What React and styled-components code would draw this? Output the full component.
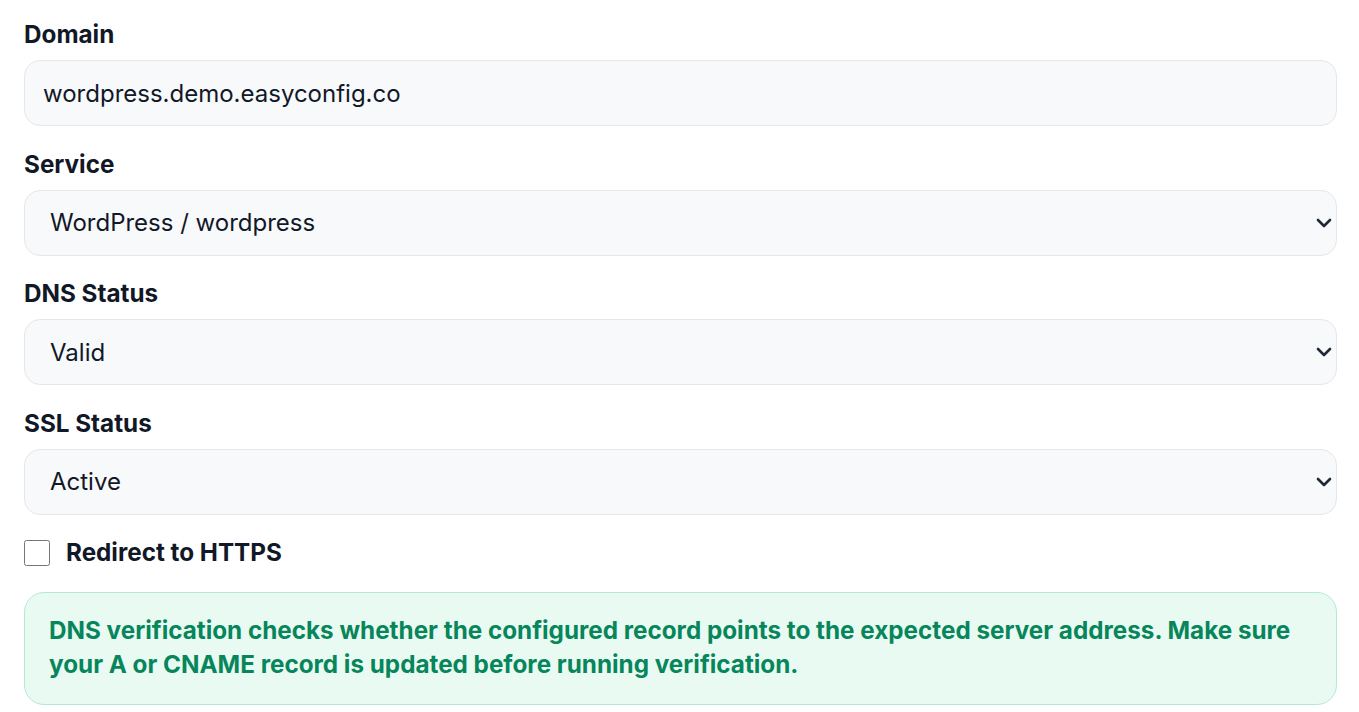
import React from "react";
import styled, { createGlobalStyle } from "styled-components";

const Global = createGlobalStyle`
  html, body { margin: 0; padding: 0; background: #ffffff; }
  body { font-family: Inter, "Noto Sans", sans-serif; color: #111827; }
`;

const Page = styled.div`
  padding: 19px 22px 0 24px;
  display: flex;
  flex-direction: column;
`;

const Field = styled.div`
  display: flex;
  flex-direction: column;
  gap: 9px;
  margin-bottom: 22.5px;
`;

const Label = styled.label`
  font-size: 24.25px;
  line-height: 32px;
  font-weight: 700;
  color: #111827;
`;

const TextInput = styled.input`
  box-sizing: border-box;
  height: 66px;
  width: 100%;
  padding: 0 18px;
  font-family: Inter, "Noto Sans", sans-serif;
  font-size: 24px;
  color: #111827;
  background: #f8f9fb;
  border: 1px solid #e5e7eb;
  border-radius: 16px;
  outline: none;
`;

const SelectWrap = styled.div`
  position: relative;
  width: 100%;
`;

const Select = styled.select`
  appearance: none;
  -webkit-appearance: none;
  box-sizing: border-box;
  height: 66px;
  width: 100%;
  padding: 0 48px 0 25px;
  font-family: Inter, "Noto Sans", sans-serif;
  font-size: 24px;
  color: #111827;
  background: #f8f9fb;
  border: 1px solid #e5e7eb;
  border-radius: 16px;
  outline: none;
`;

const Chevron = styled.svg`
  position: absolute;
  right: 5px;
  top: 50%;
  width: 16px;
  height: 10px;
  margin-top: -5px;
  pointer-events: none;
`;

const CheckRow = styled.label`
  display: flex;
  align-items: center;
  gap: 16px;
  font-size: 24.25px;
  line-height: 32px;
  font-weight: 700;
  color: #111827;
`;

const Check = styled.input`
  width: 26px;
  height: 26px;
  margin: 0;
`;

const Alert = styled.div`
  box-sizing: border-box;
  margin-top: 22.5px;
  padding: 21.5px 24px;
  background: #e9faf3;
  border: 1px solid #b4ead2;
  border-radius: 20px;
  color: #06865a;
  font-size: 24.25px;
  line-height: 34px;
  font-weight: 700;
`;

function TextField({ label, value }) {
  return (
    <Field>
      <Label>{label}</Label>
      <TextInput defaultValue={value} />
    </Field>
  );
}

function SelectField({ label, value, options }) {
  return (
    <Field>
      <Label>{label}</Label>
      <SelectWrap>
        <Select defaultValue={value}>
          {options.map((o) => (
            <option key={o} value={o}>{o}</option>
          ))}
        </Select>
        <Chevron viewBox="0 0 16 10" fill="none">
          <path d="M2 2 L8 8 L14 2" stroke="#1f2937" strokeWidth="2.6" strokeLinecap="round" strokeLinejoin="round" />
        </Chevron>
      </SelectWrap>
    </Field>
  );
}

export default function App() {
  return (
    <>
      <Global />
      <Page>
        <TextField label="Domain" value="wordpress.demo.easyconfig.co" />
        <SelectField label="Service" value="WordPress / wordpress" options={["WordPress / wordpress", "Ghost / ghost"]} />
        <SelectField label="DNS Status" value="Valid" options={["Pending", "Valid", "Invalid"]} />
        <SelectField label="SSL Status" value="Active" options={["Pending", "Active", "Expired"]} />
        <CheckRow>
          <Check type="checkbox" />
          Redirect to HTTPS
        </CheckRow>
        <Alert>
          DNS verification checks whether the configured record points to the expected server address. Make sure your A or CNAME record is updated before running verification.
        </Alert>
      </Page>
    </>
  );
}
